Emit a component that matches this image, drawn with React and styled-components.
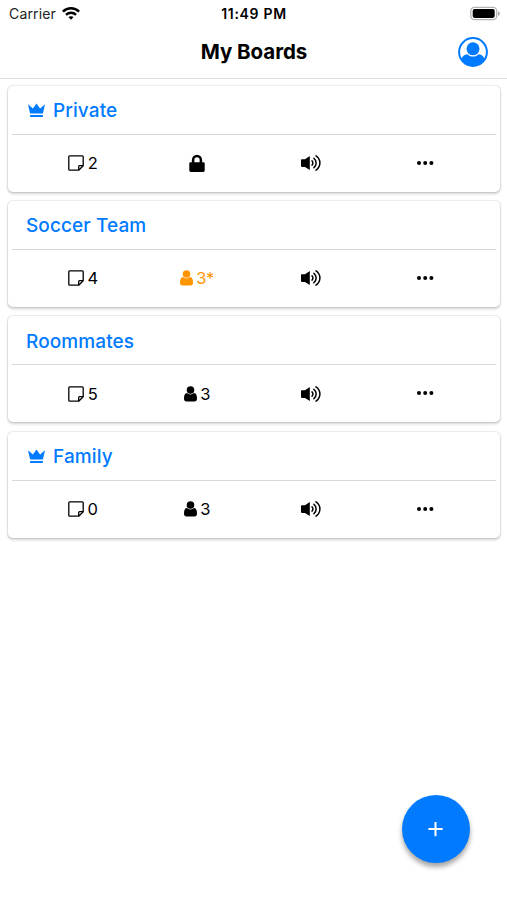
import React from "react";
import styled, { createGlobalStyle } from "styled-components";

const BLUE = "#007aff";

const GlobalStyle = createGlobalStyle`
  * { box-sizing: border-box; }
  body { margin: 0; background: #fff; font-family: Inter, "Liberation Sans", sans-serif; color: #000; }
`;

const Screen = styled.div`
  height: 900px;
  display: flex;
  flex-direction: column;
  background: #fff;
  overflow: hidden;
`;

const StatusBar = styled.div`
  height: 27px;
  flex: none;
  display: grid;
  grid-template-columns: 1fr auto 1fr;
  align-items: center;
  padding: 0 7px 0 9px;
  font-size: 14px;
  line-height: 27px;
`;

const Carrier = styled.div`
  display: flex;
  align-items: center;
  gap: 6px;
  color: #222;
  letter-spacing: 0.15px;
`;

const Clock = styled.div`
  font-weight: 600;
  letter-spacing: 0.68px;
  padding-right: 1px;
`;

const BatterySlot = styled.div`
  display: flex;
  justify-content: flex-end;
`;

const Header = styled.header`
  height: 52px;
  flex: none;
  display: grid;
  grid-template-columns: 1fr auto 1fr;
  align-items: center;
  padding: 0 19px 2px 20px;
  border-bottom: 1px solid #dcdcdc;
`;

const Title = styled.h1`
  grid-column: 2;
  margin: 0;
  font-size: 20.5px;
  line-height: 26px;
  font-weight: 650;
  letter-spacing: -0.05px;
`;

const ProfileButton = styled.button`
  justify-self: end;
  display: flex;
  padding: 0;
  border: 0;
  background: none;
  color: ${BLUE};
`;

const BoardList = styled.main`
  flex: 1;
  display: flex;
  flex-direction: column;
  gap: 9.4px;
  padding: 6.5px 7px 0 8px;
`;

const Card = styled.section`
  height: 106px;
  padding: 0 4px;
  border-radius: 5px;
  background: #fff;
  box-shadow: 0 0 1px 0.5px rgba(0, 0, 0, 0.08), 0 2px 3px rgba(0, 0, 0, 0.17);
`;

const CardTitle = styled.h2`
  height: 49px;
  margin: 0;
  padding: 3px 14px 0 ${(p) => (p.$owned ? 16 : 14)}px;
  display: flex;
  align-items: center;
  gap: 8px;
  border-bottom: 1px solid #d9d9d9;
  color: ${BLUE};
  font-size: 19px;
  font-weight: 550;
  line-height: 24px;
  letter-spacing: 0.1px;
`;

const Actions = styled.div`
  height: 57px;
  display: grid;
  grid-template-columns: repeat(4, 114px);
  justify-content: center;
`;

const Action = styled.div`
  display: flex;
  align-items: center;
  justify-content: center;
  gap: 3.5px;
  font-size: 16.5px;
  color: ${(p) => (p.$pending ? "#ff9500" : "#000")};
`;

const AddButton = styled.button`
  position: absolute;
  left: 402px;
  top: 795px;
  width: 68px;
  height: 68px;
  padding: 0 1px 0 0;
  display: flex;
  align-items: center;
  justify-content: center;
  border: 0;
  border-radius: 50%;
  background: ${BLUE};
  color: #fff;
  box-shadow: 0 4px 5px rgba(0, 0, 0, 0.36);
`;

const Icon = styled.svg`
  display: block;
  flex: none;
  overflow: visible;
`;

const Wifi = () => (
  <Icon width="18" height="14" viewBox="0 0 18 14" fill="none" stroke="#000" strokeWidth="2.4">
    <path d="M.9 4.600C5.500.1 12.500.1 17.100 4.600" />
    <path d="M4 7.800c2.800-2.700 7.200-2.700 10 0" />
    <path d="M6.400 10.100 9 12.800l2.600-2.700c-1.500-1.300-3.700-1.300-5.200 0z" fill="#000" stroke="none" />
  </Icon>
);

const Battery = () => (
  <Icon width="30" height="14" viewBox="0 0 30 14">
    <rect x=".8" y=".3" width="25.9" height="12.4" rx="3.6" fill="#fff" stroke="#b4b4b4" strokeWidth="1.3" />
    <rect x="2.7" y="2.1" width="22" height="8.8" rx="1.8" />
    <path d="M28 4.200c2.400.8 2.400 3.800 0 4.600z" fill="#aaa" />
  </Icon>
);

const Profile = () => (
  <Icon width="30" height="30" viewBox="0 0 30 30" fill="currentColor">
    <circle cx="15" cy="15" r="13.900" fill="none" stroke="currentColor" strokeWidth="2" />
    <circle cx="15" cy="11.800" r="6.500" />
    <path d="M3.300 22.600C4.200 19 6.200 17.400 9.400 17.200c2.900 3.200 8.300 3.200 11.200 0 3.200.2 5.200 1.800 6.100 5.400C24.200 26.800 19.900 29 15 29S5.800 26.800 3.300 22.600z" />
  </Icon>
);

const Crown = () => (
  <Icon width="17" height="15" viewBox="0 0 17 15" fill="currentColor">
    <path d="M0 .3 4.900 4.600 8.500-.5 12.100 4.600 17 .3 14.900 9.500H2.100z" />
    <path d="M2.100 11h12.800v2H2.100z" />
  </Icon>
);

const Note = () => (
  <Icon width="16" height="16" viewBox="0 0 16 16" fill="none" stroke="currentColor" strokeWidth="1.3" strokeLinejoin="round">
    <path d="M1.700.8h12.600q.9 0 .9.900v9L10.700 15.200h-9q-.9 0-.9-.9V1.700q0-.9.900-.9z" />
    <path d="M10.700 15v-3.400q0-.9.900-.9H15" />
  </Icon>
);

const Lock = () => (
  <Icon width="16" height="18" viewBox="0 0 16 18">
    <path d="M4.100 9V6a3.900 3.900 0 0 1 7.800 0V9" fill="none" stroke="currentColor" strokeWidth="2.500" />
    <rect x=".3" y="8.200" width="15.400" height="9.800" rx="1.400" fill="currentColor" />
  </Icon>
);

const Person = () => (
  <Icon width="13" height="16" viewBox="0 0 13 16" fill="currentColor">
    <circle cx="6.500" cy="4" r="3.800" />
    <path d="M3 7.100c2 1.800 5 1.800 7 0 2.300.2 3 2.500 3 5.700 0 1.700-1 2.800-2.500 2.800h-8C1 15.600 0 14.500 0 12.800 0 9.600.7 7.300 3 7.100z" />
  </Icon>
);

const Sound = () => (
  <Icon width="20" height="16" viewBox="0 0 20 16">
    <path d="M.8 4.200H4L8.800.9v14.200L4 11.900H.8q-.8 0-.8-.8V5q0-.8.800-.8z" fill="currentColor" />
    <g fill="none" stroke="currentColor" strokeWidth="1.500" strokeLinecap="round">
      <path d="M11 5.900c1.200 1 1.200 3.200 0 4.200" />
      <path d="M12.900 3.300c3 2.300 3 7.100 0 9.400" />
      <path d="M15 .9c5.200 3.600 5.200 10.600 0 14.200" />
    </g>
  </Icon>
);

const More = () => (
  <Icon width="17" height="5" viewBox="0 0 17 5" fill="currentColor">
    <circle cx="2" cy="2" r="2" />
    <circle cx="8.200" cy="2" r="2" />
    <circle cx="14.400" cy="2" r="2" />
  </Icon>
);

const Plus = () => (
  <Icon width="15" height="15" viewBox="0 0 15 15" stroke="currentColor" strokeWidth="2">
    <path d="M7.500 0v14.200M.4 7.100h14.200" />
  </Icon>
);

const boards = [
  { name: "Private", owned: true, notes: 2 },
  { name: "Soccer Team", notes: 4, members: "3*", pending: true },
  { name: "Roommates", notes: 5, members: "3" },
  { name: "Family", owned: true, notes: 0, members: "3" },
];

function Board({ board }) {
  return (
    <Card>
      <CardTitle $owned={board.owned}>
        {board.owned && <Crown />}
        {board.name}
      </CardTitle>
      <Actions>
        <Action><Note />{board.notes}</Action>
        <Action $pending={board.pending}>
          {board.members ? <><Person />{board.members}</> : <Lock />}
        </Action>
        <Action><Sound /></Action>
        <Action><More /></Action>
      </Actions>
    </Card>
  );
}

export default function App() {
  return (
    <Screen>
      <GlobalStyle />
      <StatusBar>
        <Carrier>Carrier<Wifi /></Carrier>
        <Clock>11:49 PM</Clock>
        <BatterySlot><Battery /></BatterySlot>
      </StatusBar>
      <Header>
        <Title>My Boards</Title>
        <ProfileButton aria-label="Profile"><Profile /></ProfileButton>
      </Header>
      <BoardList>
        {boards.map((board) => <Board key={board.name} board={board} />)}
      </BoardList>
      <AddButton aria-label="Add board"><Plus /></AddButton>
    </Screen>
  );
}
